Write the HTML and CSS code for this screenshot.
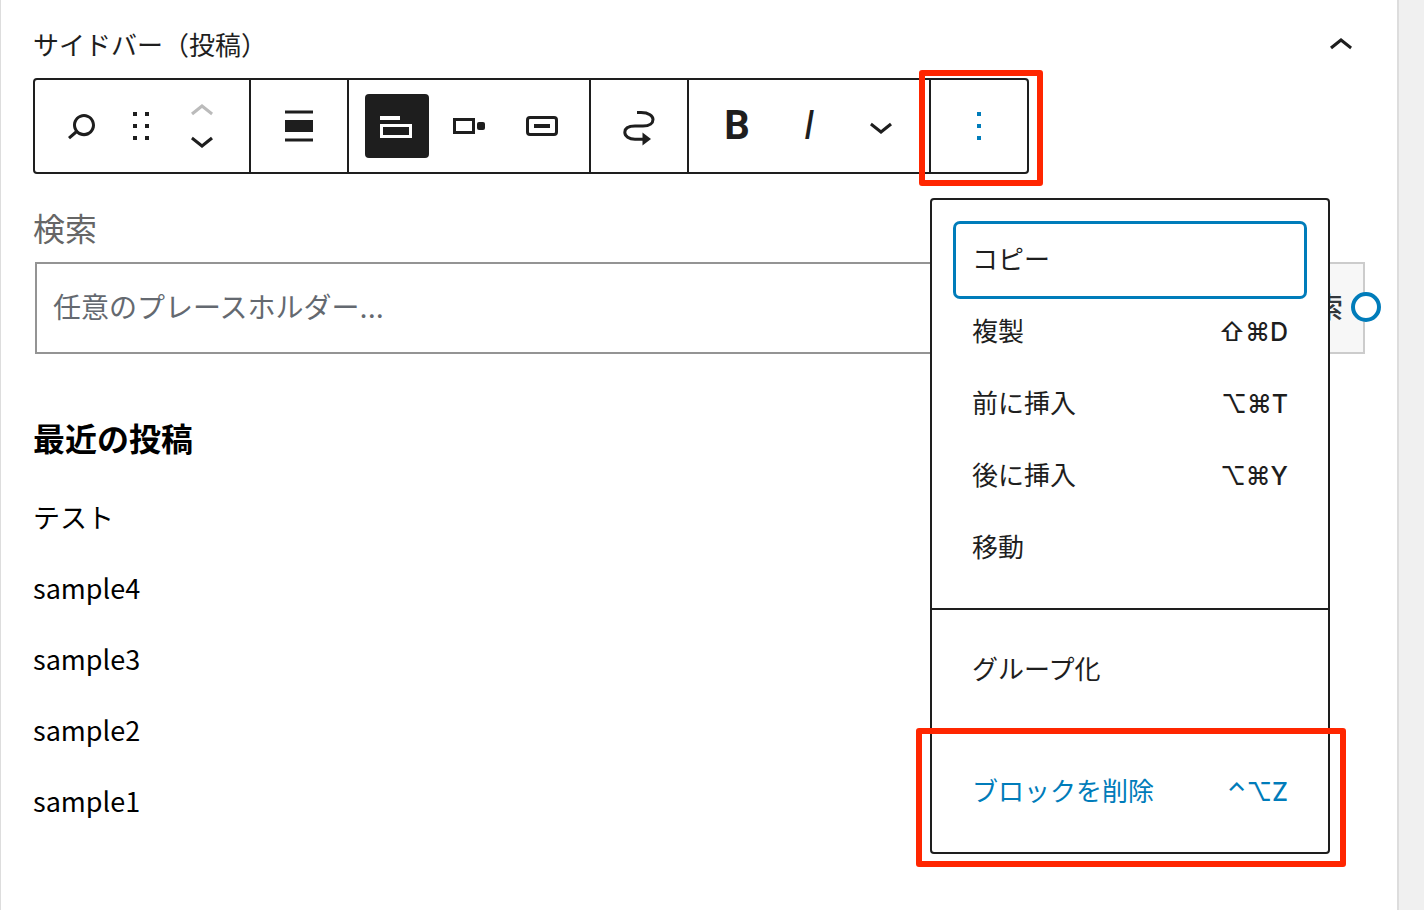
FILE: index.html
```html
<!DOCTYPE html>
<html lang="ja">
<head>
    <meta charset="UTF-8">
    <meta name="viewport" content="width=device-width, initial-scale=1.0">
    <title>サイドバー（投稿）</title>
    <link rel="stylesheet" href="styles.css">
</head>
<body>

    <main class="panel">

        <div class="panel-header">
            <h2 class="panel-title">サイドバー（投稿）</h2>
            <button class="panel-toggle" type="button" aria-label="閉じる" aria-expanded="true">
                <svg class="icon" viewBox="0 0 24 24"><path d="M6.5 12.4L12 8l5.5 4.4-.9 1.2L12 10l-4.5 3.6-1-1.2z"/></svg>
            </button>
        </div>

        <!-- block toolbar -->
        <div class="toolbar" role="toolbar" aria-label="ブロックツール">
            <div class="group">
                <button class="tool tool-block" type="button" aria-label="検索">
                    <svg class="icon" viewBox="0 0 24 24"><path d="M13.5 6C10.5 6 8 8.5 8 11.5c0 1.1.3 2.1.9 3l-3.4 3 1 1.1 3.4-2.9c1 .9 2.2 1.4 3.6 1.4 3 0 5.5-2.5 5.5-5.5C19 8.5 16.5 6 13.5 6zm0 9.5c-2.2 0-4-1.8-4-4s1.8-4 4-4 4 1.8 4 4-1.8 4-4 4z"/></svg>
                </button>
                <button class="tool tool-drag" type="button" aria-label="ドラッグ">
                    <svg class="icon icon-drag" viewBox="0 0 18 18"><path d="M5 4h2V2H5v2zm6-2v2h2V2h-2zm-6 8h2V8H5v2zm6 0h2V8h-2v2zm-6 6h2v-2H5v2zm6 0h2v-2h-2v2z"/></svg>
                </button>
                <div class="movers">
                    <button class="mover" type="button" aria-label="上に移動" disabled>
                        <svg class="icon" viewBox="0 0 24 24"><path d="M6.5 12.4L12 8l5.5 4.4-.9 1.2L12 10l-4.5 3.6-1-1.2z"/></svg>
                    </button>
                    <button class="mover" type="button" aria-label="下に移動">
                        <svg class="icon" viewBox="0 0 24 24"><path d="M17.5 11.6L12 16l-5.5-4.4.9-1.2L12 14l4.5-3.6 1 1.2z"/></svg>
                    </button>
                </div>
            </div>
            <div class="group">
                <button class="tool" type="button" aria-label="配置">
                    <svg class="icon" viewBox="0 0 24 24"><path d="M5 9v6h14V9H5zM5 4.2v1.5h14V4.2H5zM5 18.3v1.5h14v-1.5H5z"/></svg>
                </button>
            </div>
            <div class="group">
                <button class="tool active" type="button" aria-label="ラベル" aria-pressed="true">
                    <svg class="icon" viewBox="0 0 48 48"><path d="M7 14h20v4H7z"/><path fill-rule="evenodd" d="M7 22h32v14H7zM10 25v8h26v-8z"/></svg>
                </button>
                <button class="tool" type="button" aria-label="ボタンの位置">
                    <svg class="icon" viewBox="0 0 48 48"><path fill-rule="evenodd" d="M8 16h22v16H8zM11 19v10h16V19z"/><rect x="32" y="20" width="8" height="8" rx="2"/></svg>
                </button>
                <button class="tool" type="button" aria-label="アイコンボタン">
                    <svg class="icon" viewBox="0 0 48 48"><rect x="10.5" y="15.5" width="29" height="17" rx="2.5" fill="none" stroke="currentColor" stroke-width="3"/><path d="M17 22h16v4H17z"/></svg>
                </button>
            </div>
            <div class="group">
                <button class="tool" type="button" aria-label="変換">
                    <svg class="icon" viewBox="0 0 48 48"><path d="M22 10.5h4C34 10.5 38 14 38 17.5S35 24 28 24h-8C13 24 9.8 26.5 9.8 30.3S14 37.3 20 37.3h9" fill="none" stroke="currentColor" stroke-width="3"/><path d="M27.5 30.5L36 37l-8.5 6.5z"/></svg>
                </button>
            </div>
            <div class="group">
                <button class="tool tool-bold" type="button" aria-label="太字">B</button>
                <button class="tool tool-italic" type="button" aria-label="イタリック">I</button>
                <button class="tool" type="button" aria-label="さらに表示">
                    <svg class="icon" viewBox="0 0 24 24"><path d="M17.5 11.6L12 16l-5.5-4.4.9-1.2L12 14l4.5-3.6 1 1.2z"/></svg>
                </button>
            </div>
            <div class="group group-more">
                <button class="tool tool-more" type="button" aria-label="オプション" aria-expanded="true">
                    <svg class="icon" viewBox="0 0 24 24"><path d="M13 19h-2v-2h2v2zm0-6h-2v-2h2v2zm0-6h-2V5h2v2z"/></svg>
                </button>
                <div class="highlight highlight-more"></div>

                <div class="menu" role="menu">
                    <div class="menu-group">
                        <button class="menu-item focused" type="button" role="menuitem">コピー</button>
                        <button class="menu-item" type="button" role="menuitem">複製<span class="shortcut">⇧⌘D</span></button>
                        <button class="menu-item" type="button" role="menuitem">前に挿入<span class="shortcut">⌥⌘T</span></button>
                        <button class="menu-item" type="button" role="menuitem">後に挿入<span class="shortcut">⌥⌘Y</span></button>
                        <button class="menu-item" type="button" role="menuitem">移動</button>
                    </div>
                    <div class="menu-group">
                        <button class="menu-item" type="button" role="menuitem">グループ化</button>
                    </div>
                    <div class="menu-group">
                        <button class="menu-item remove" type="button" role="menuitem">ブロックを削除<span class="shortcut">⌃⌥Z</span></button>
                        <div class="highlight highlight-remove"></div>
                    </div>
                </div>
            </div>
        </div>

        <!-- search widget -->
        <form class="search">
            <label class="search-label" for="search">検索</label>
            <div class="search-row">
                <input class="search-input" id="search" type="text" placeholder="任意のプレースホルダー...">
                <button class="search-button" type="button">検索</button>
                <span class="resize-handle"></span>
            </div>
        </form>

        <!-- recent posts widget -->
        <section class="recent">
            <h3 class="recent-title">最近の投稿</h3>
            <ul class="recent-list">
                <li><a href="#">テスト</a></li>
                <li><a href="#">sample4</a></li>
                <li><a href="#">sample3</a></li>
                <li><a href="#">sample2</a></li>
                <li><a href="#">sample1</a></li>
            </ul>
        </section>

    </main>

</body>
</html>
```

FILE: styles.css
```css
*{
    box-sizing: border-box;
    margin: 0;
    padding: 0;
}

body{
    min-height: 100vh;
    display: flex;
    padding-right: 25px;
    background: #f0f0f0;
    color: #1e1e1e;
    font-family: Inter, "Noto Sans CJK JP", sans-serif;
    font-size: 26px;
    line-height: 36px;
}

button, input{
    font: inherit;
    color: inherit;
    background: none;
    border: none;
    outline: none;
}

button{
    cursor: pointer;
}

.icon{
    display: block;
    flex: none;
    width: 48px;
    height: 48px;
    fill: currentColor;
}

.icon-drag{
    width: 36px;
    height: 36px;
}

.panel{
    flex: 1;
    min-width: 0;
    padding: 22px 32px 0;
    background: #fff;
    border-left: 1px solid #ddd;
    border-right: 2px solid #ddd;
}

.panel-header{
    display: flex;
    justify-content: space-between;
    align-items: center;
    height: 48px;
    margin-bottom: 8px;
}

.panel-title{
    font-size: 26px;
    font-weight: 400;
}

/* toolbar */

.toolbar{
    display: flex;
    width: fit-content;
    height: 96px;
    border: 2px solid #1e1e1e;
    border-radius: 4px;
}

.group{
    display: flex;
    padding: 0 12px;
    border-right: 2px solid #1e1e1e;
}

.group-more{
    position: relative;
    border-right: none;
}

.tool{
    display: flex;
    justify-content: center;
    align-items: center;
    width: 72px;
}

.tool-block{
    width: 68px;
}

.tool-drag{
    width: 52px;
}

.tool.active{
    width: 64px;
    height: 64px;
    margin: 14px 4px;
    color: #fff;
    background: #1e1e1e;
    border-radius: 4px;
}

.tool-bold, .tool-italic{
    font-family: Roboto, sans-serif;
    font-size: 40px;
    font-weight: 700;
}

.tool-italic{
    font-weight: 400;
    font-style: italic;
}

.tool-more{
    color: #007cba;
}

.movers{
    display: flex;
    flex-direction: column;
    justify-content: center;
    width: 70px;
}

.mover{
    display: flex;
    justify-content: center;
    align-items: center;
    height: 28px;
}

.mover:disabled{
    color: #bbb;
}

/* options menu */

.menu{
    position: absolute;
    top: 118px;
    left: -1px;
    z-index: 10;
    width: 400px;
    background: #fff;
    border: 2px solid #1e1e1e;
    border-radius: 4px;
}

.menu-group{
    position: relative;
    padding: 24px;
}

.menu-group + .menu-group{
    border-top: 2px solid #1e1e1e;
}

.menu-item{
    display: flex;
    justify-content: space-between;
    align-items: center;
    width: 100%;
    height: 72px;
    padding: 0 16px;
    border-radius: 4px;
    text-align: left;
}

.menu-item.focused{
    box-shadow: 0 0 0 3px #007cba;
}

.menu-item.remove{
    color: #007cba;
}

.shortcut{
    font-family: Inter, "DejaVu Sans", sans-serif;
    font-size: 25px;
    font-weight: 500;
}

.highlight{
    position: absolute;
    z-index: 20;
    border: 6px solid #ff2600;
    border-radius: 3px;
    pointer-events: none;
}

.highlight-more{
    top: -10px;
    right: -16px;
    bottom: -14px;
    left: -12px;
}

.highlight-remove{
    top: -4px;
    right: -18px;
    bottom: -15px;
    left: -16px;
}

/* search */

.search{
    margin-top: 32px;
}

.search-label{
    display: block;
    margin-bottom: 8px;
    color: #666;
    font-size: 32px;
    line-height: 48px;
}

.search-row{
    position: relative;
    display: flex;
    gap: 20px;
    height: 92px;
    margin-left: 2px;
    font-size: 28px;
}

.search-input{
    flex: 1;
    min-width: 0;
    padding: 0 16px;
    border: 2px solid #949494;
}

.search-input::placeholder{
    color: #646970;
    opacity: 1;
}

.search-button{
    padding: 0 20px;
    color: #32373c;
    background: #f7f7f7;
    border: 2px solid #ccc;
    font-weight: 500;
}

.resize-handle{
    position: absolute;
    top: 30px;
    right: -16px;
    width: 30px;
    height: 30px;
    background: #fff;
    border: 4px solid #007cba;
    border-radius: 50%;
}

/* recent posts */

.recent{
    margin-top: 62px;
    color: #000;
}

.recent-title{
    margin-bottom: 17px;
    font-size: 32px;
    font-weight: 700;
    line-height: 48px;
}

.recent-list{
    list-style: none;
    font-family: "Noto Sans CJK JP", sans-serif;
    font-size: 27px;
    line-height: 71px;
}

.recent-list a{
    color: inherit;
    text-decoration: none;
}
```
